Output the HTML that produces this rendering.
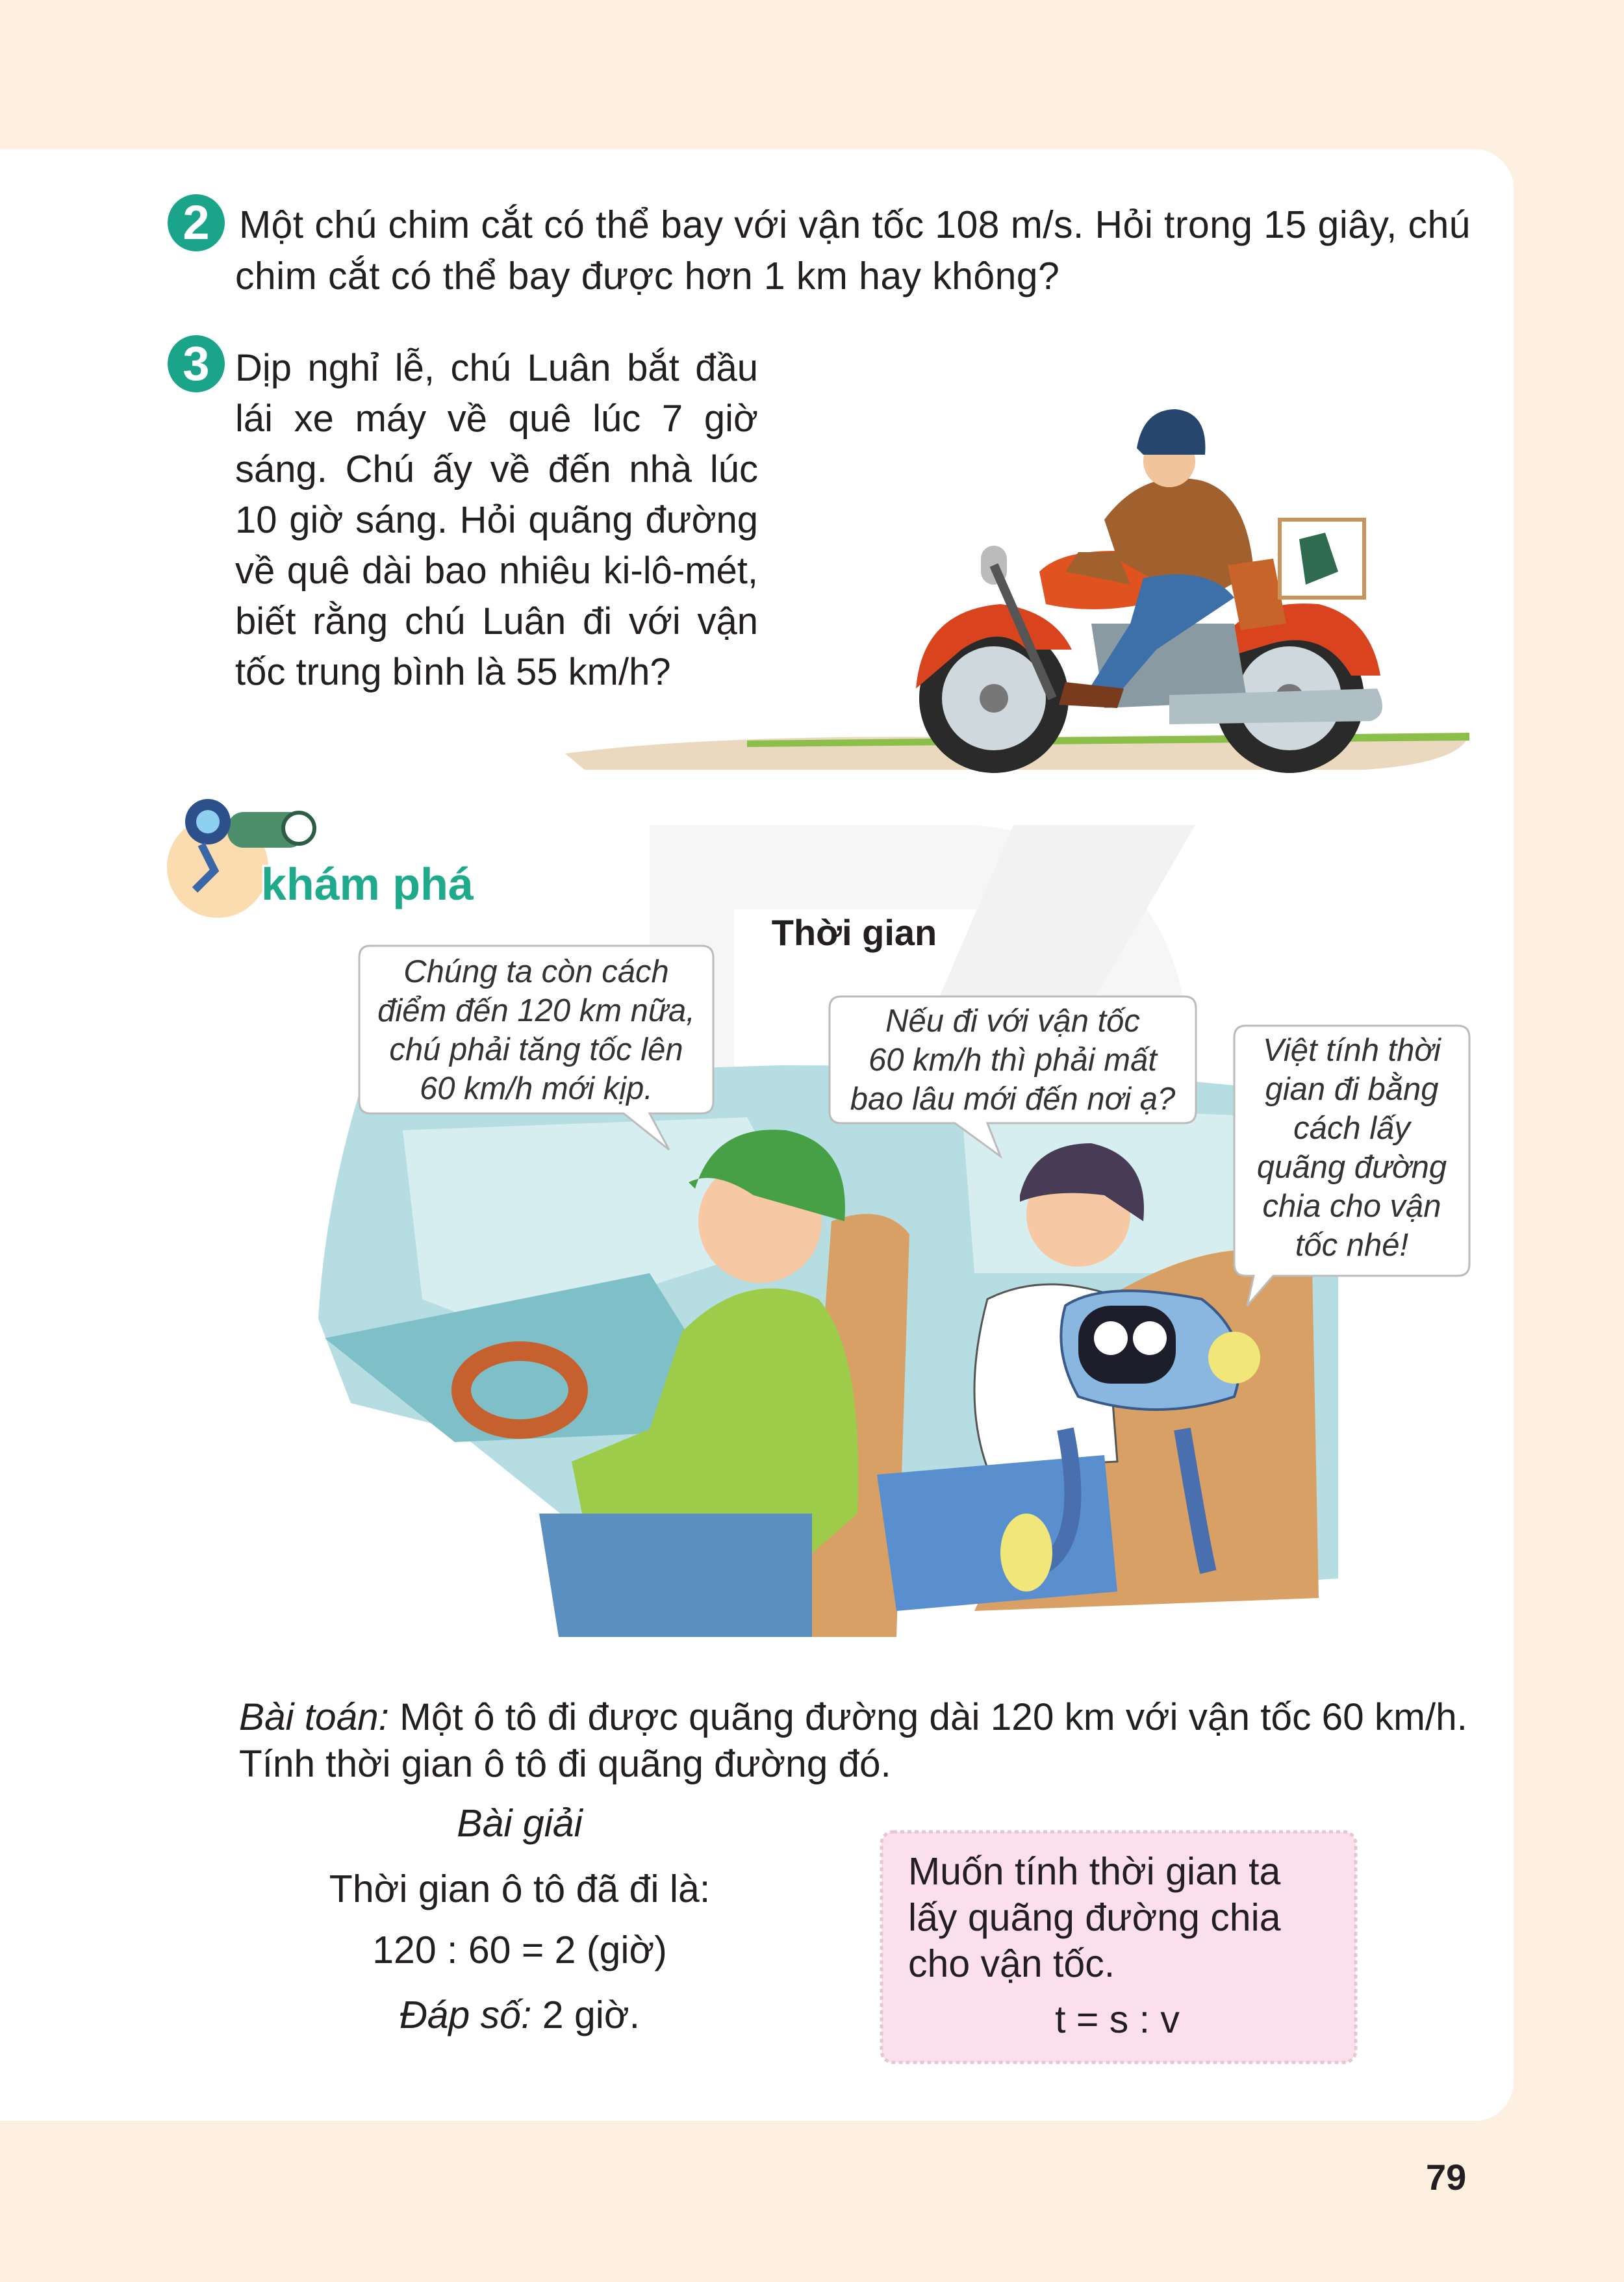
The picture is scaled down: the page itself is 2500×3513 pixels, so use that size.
<!DOCTYPE html>
<html><head><meta charset="utf-8">
<style>
html,body{margin:0;padding:0}
body{width:2500px;height:3513px;background:#fdf0e0;position:relative;overflow:hidden;font-family:"Liberation Sans",sans-serif;color:#231f20}
.card{position:absolute;left:-60px;top:230px;width:2390px;height:3035px;background:#fff;border-radius:0 60px 60px 0}
.t{position:absolute;font-size:59px;line-height:79px;white-space:nowrap}
.j{position:absolute;left:362px;width:805px;font-size:58px;line-height:78px;text-align:justify;text-align-last:justify;white-space:nowrap}
.num{position:absolute;width:88px;height:88px;border-radius:50%;background:#1aa58a;color:#fff;font-weight:bold;font-size:74px;line-height:88px;text-align:center}
.b{position:absolute;font-style:italic;font-size:49px;line-height:60px;text-align:center;color:#333;white-space:nowrap}
svg{position:absolute;left:0;top:0}
</style></head><body>
<div class="card"></div>
<svg width="2500" height="3513" viewBox="0 0 2500 3513">
<g fill="#f6f6f6">
<path d="M1000 1270 L1500 1270 Q1820 1300 1830 1620 L1830 2300 L1700 2300 L1700 1700 Q1690 1420 1500 1400 L1130 1400 L1130 2300 L1000 2300Z"/>
<path d="M1560 1270 L1840 1270 L1300 2200 L1160 2200Z" fill="#f2f2f2"/>
</g>
<path d="M870 1160 Q1100 1130 1500 1135 L2262 1130 Q2250 1175 2100 1185 L900 1185Z" fill="#ead9bf"/>
<path d="M1150 1140 L2262 1128 L2262 1140 L1150 1150Z" fill="#8bbf4a"/>
<g>
<circle cx="1530" cy="1075" r="115" fill="#2a2a2a"/><circle cx="1530" cy="1075" r="80" fill="#cfd8dc"/><circle cx="1530" cy="1075" r="22" fill="#777"/>
<circle cx="1985" cy="1075" r="115" fill="#2a2a2a"/><circle cx="1985" cy="1075" r="80" fill="#cfd8dc"/><circle cx="1985" cy="1075" r="22" fill="#777"/>
<path d="M1410 1060 Q1420 940 1540 930 Q1620 940 1650 1000 L1580 1000 Q1540 960 1480 1000Z" fill="#d9441e"/>
<path d="M1860 1020 Q1900 920 2030 930 Q2110 950 2125 1040 L2080 1040 Q2040 970 1960 990Z" fill="#d9441e"/>
<path d="M1600 880 Q1640 840 1760 850 Q1820 870 1800 920 Q1700 950 1610 930Z" fill="#e0521f"/>
<path d="M1680 960 L1900 960 L1920 1080 L1700 1090Z" fill="#8a9aa3"/>
<path d="M1800 1070 L2120 1060 Q2140 1100 2110 1110 L1800 1115Z" fill="#b0bec5"/>
<rect x="1510" y="840" width="40" height="60" rx="20" fill="#bbb"/>
<path d="M1530 870 L1620 1075" stroke="#555" stroke-width="14"/>
<path d="M1700 800 Q1760 720 1850 740 Q1920 760 1930 880 L1860 920 Q1780 900 1720 860Z" fill="#a0612e"/>
<path d="M1720 850 L1660 850 L1640 880 L1740 900Z" fill="#a0612e"/>
<path d="M1760 890 Q1860 870 1900 920 L1780 1000 L1720 1070 L1680 1055 L1740 960Z" fill="#3d6fa8"/>
<path d="M1640 1050 L1730 1060 L1720 1090 L1630 1085Z" fill="#7a3b1c"/>
<circle cx="1800" cy="710" r="40" fill="#f2c49b"/>
<path d="M1750 690 Q1760 630 1810 630 Q1860 635 1855 700 L1760 700Z" fill="#27466e"/>
<path d="M1890 870 L1960 860 L1980 960 L1910 970Z" fill="#c8642a"/>
<rect x="1970" y="800" width="130" height="120" fill="none" stroke="#c9945a" stroke-width="6"/>
<path d="M2000 830 L2040 820 L2060 880 L2010 900Z" fill="#2e6b4f"/>
</g>
<circle cx="335" cy="1335" r="78" fill="#fbdcae"/>
<rect x="350" y="1250" width="120" height="55" rx="25" fill="#4d8f6a"/>
<circle cx="460" cy="1275" r="24" fill="#fff" stroke="#2d5d44" stroke-width="6"/>
<circle cx="320" cy="1265" r="35" fill="#2d4f8a"/><circle cx="320" cy="1265" r="18" fill="#8fd0f0"/>
<path d="M310 1300 L330 1340 L300 1370" stroke="#3a67a8" stroke-width="12" fill="none"/>
<text x="402" y="1385" font-family="Liberation Sans" font-weight="bold" font-size="70" fill="#1faa8c" stroke="#fff" stroke-width="6" paint-order="stroke">khám phá</text>
<path d="M560 1660 L1200 1640 Q1700 1640 2060 1690 L2060 2430 L1400 2470 L1200 2520 L1130 2520 L900 2360 L700 2200 L540 2160 L490 2030 Q500 1850 560 1660Z" fill="#b5dde2"/>
<path d="M620 1740 L1150 1720 L1250 1900 L780 2050 L650 2000Z" fill="#d7eef0"/>
<path d="M1480 1700 L1980 1720 L1980 1960 L1500 1960Z" fill="#d7eef0"/>
<path d="M500 2060 L1000 1960 L1150 2200 L700 2220Z" fill="#7fbfc7"/>
<path d="M1280 1880 Q1360 1850 1400 1900 L1380 2520 L1150 2520 L1250 2300Z" fill="#d9a066"/>
<path d="M1700 2000 Q1900 1880 2020 1950 L2030 2460 L1500 2480 L1560 2350Z" fill="#d9a066"/>
<path d="M1050 2050 Q1150 1950 1260 2000 Q1330 2080 1320 2330 L1240 2400 L900 2350 L880 2250 L1000 2200Z" fill="#9ccc4a"/>
<path d="M830 2330 L1250 2330 L1250 2520 L860 2520Z" fill="#5a8fbf"/>
<ellipse cx="800" cy="2140" rx="90" ry="60" fill="none" stroke="#c6602e" stroke-width="30"/>
<circle cx="1170" cy="1880" r="95" fill="#f6c9a4"/>
<path d="M1070 1830 Q1100 1730 1210 1740 Q1310 1760 1300 1880 L1160 1840 Q1100 1800 1060 1820Z" fill="#47a045"/>
<path d="M1520 2000 Q1600 1960 1700 1990 L1720 2250 L1520 2260 Q1480 2150 1520 2000Z" fill="#fff" stroke="#555" stroke-width="3"/>
<path d="M1350 2270 L1700 2240 L1720 2450 L1380 2480Z" fill="#5a8fcf"/>
<circle cx="1660" cy="1870" r="80" fill="#f6c9a4"/>
<path d="M1570 1840 Q1590 1760 1680 1760 Q1770 1780 1760 1880 L1700 1840 Q1620 1830 1570 1850Z" fill="#473b55"/>
<path d="M1640 2010 Q1700 1970 1850 2000 Q1930 2060 1900 2150 Q1780 2190 1660 2150 Q1620 2080 1640 2010Z" fill="#8ab7e0" stroke="#3a5a8a" stroke-width="4"/>
<rect x="1660" y="2010" width="150" height="120" rx="50" fill="#1d1d2b"/>
<circle cx="1710" cy="2060" r="26" fill="#fff"/><circle cx="1770" cy="2060" r="26" fill="#fff"/>
<circle cx="1900" cy="2090" r="40" fill="#f1e67a"/>
<path d="M1640 2200 Q1680 2400 1580 2420 M1820 2200 Q1850 2380 1860 2420" stroke="#4a6fae" stroke-width="26" fill="none"/>
<ellipse cx="1580" cy="2390" rx="40" ry="60" fill="#f1e67a"/>
<g fill="#fff" stroke="#bbb" stroke-width="3">
<path d="M570 1456 L1080 1456 Q1098 1456 1098 1474 L1098 1696 Q1098 1714 1080 1714 L1000 1714 L1030 1770 L960 1714 L570 1714 Q553 1714 553 1696 L553 1474 Q553 1456 570 1456Z"/>
<path d="M1295 1534 L1823 1534 Q1841 1534 1841 1552 L1841 1711 Q1841 1729 1823 1729 L1520 1729 L1540 1780 L1470 1729 L1295 1729 Q1277 1729 1277 1711 L1277 1552 Q1277 1534 1295 1534Z"/>
<path d="M1918 1579 L2244 1579 Q2262 1579 2262 1597 L2262 1946 Q2262 1964 2244 1964 L1960 1964 L1920 2010 L1930 1964 L1918 1964 Q1900 1964 1900 1946 L1900 1597 Q1900 1579 1918 1579Z"/>
</g>
<rect x="1357" y="2820" width="730" height="355" rx="18" fill="#fbdfec" stroke="#e5c6d3" stroke-width="5" stroke-dasharray="6 5"/>
</svg>

<div class="num" style="left:258px;top:299px">2</div>
<div class="t" style="left:368px;top:307px;letter-spacing:0.4px">Một chú chim cắt có thể bay với vận tốc 108 m/s. Hỏi trong 15 giây, chú</div>
<div class="t" style="left:362px;top:386px;letter-spacing:0.4px">chim cắt có thể bay được hơn 1 km hay không?</div>
<div class="num" style="left:258px;top:516px">3</div>
<div class="j" style="top:528px">Dịp nghỉ lễ, chú Luân bắt đầu</div>
<div class="j" style="top:606px">lái xe máy về quê lúc 7 giờ</div>
<div class="j" style="top:684px">sáng. Chú ấy về đến nhà lúc</div>
<div class="j" style="top:762px">10 giờ sáng. Hỏi quãng đường</div>
<div class="j" style="top:840px">về quê dài bao nhiêu ki-lô-mét,</div>
<div class="j" style="top:918px">biết rằng chú Luân đi với vận</div>
<div class="j" style="top:996px;text-align:left;text-align-last:left">tốc trung bình là 55 km/h?</div>

<div class="t" style="left:1115px;top:1396px;width:400px;text-align:center;font-weight:bold;font-size:56px">Thời gian</div>

<div class="b" style="left:553px;top:1466px;width:545px">Chúng ta còn cách<br>điểm đến 120 km nữa,<br>chú phải tăng tốc lên<br>60 km/h mới kịp.</div>
<div class="b" style="left:1277px;top:1542px;width:564px">Nếu đi với vận tốc<br>60 km/h thì phải mất<br>bao lâu mới đến nơi ạ?</div>
<div class="b" style="left:1900px;top:1587px;width:362px">Việt tính thời<br>gian đi bằng<br>cách lấy<br>quãng đường<br>chia cho vận<br>tốc nhé!</div>

<div class="t" style="left:368px;top:2604px;font-size:58.5px"><i>Bài toán:</i> Một ô tô đi được quãng đường dài 120 km với vận tốc 60 km/h.</div>
<div class="t" style="left:368px;top:2676px;font-size:58.5px">Tính thời gian ô tô đi quãng đường đó.</div>
<div class="t" style="left:500px;top:2768px;width:600px;text-align:center"><i>Bài giải</i></div>
<div class="t" style="left:500px;top:2869px;width:600px;text-align:center">Thời gian ô tô đã đi là:</div>
<div class="t" style="left:500px;top:2963px;width:600px;text-align:center">120 : 60 = 2 (giờ)</div>
<div class="t" style="left:500px;top:3063px;width:600px;text-align:center"><i>Đáp số:</i> 2 giờ.</div>

<div class="t" style="left:1398px;top:2846px;line-height:71px">Muốn tính thời gian ta<br>lấy quãng đường chia<br>cho vận tốc.</div>
<div class="t" style="left:1520px;top:3070px;width:400px;text-align:center">t = s : v</div>

<div class="t" style="left:2195px;top:3312px;font-weight:bold;font-size:56px">79</div>
</body></html>
